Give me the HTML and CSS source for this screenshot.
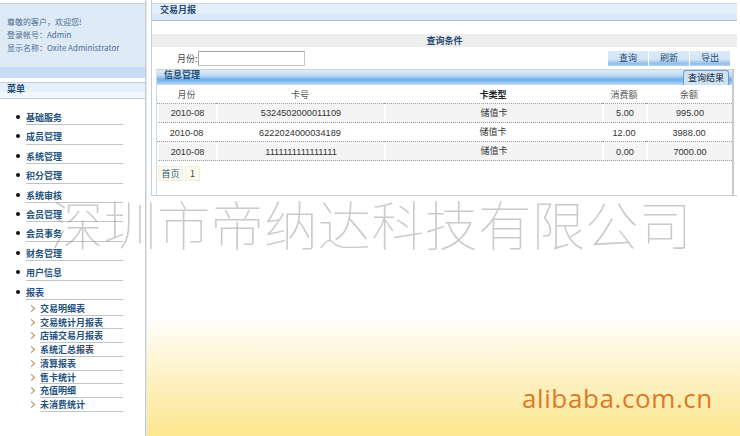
FILE: index.html
```html
<!DOCTYPE html>
<html lang="zh-CN">
<head>
  <meta charset="UTF-8" />
  <title>交易月报</title>
  <link rel="stylesheet" href="styles.css">
</head>
<body>
  <!-- left menu -->
  <div class="sidebar">
    <div class="welcome">
      <div class="welcome-text">
        <p>尊敬的客户，欢迎您!</p>
        <p>登录帐号：Admin</p>
        <p>显示名称：Oxite Administrator</p>
      </div>
      <div class="welcome-band"></div>
    </div>
    <div class="menu-head">菜单</div>
    <ul class="menu">
      <li>基础服务</li>
      <li>成员管理</li>
      <li>系统管理</li>
      <li>积分管理</li>
      <li>系统审核</li>
      <li>会员管理</li>
      <li>会员事务</li>
      <li>财务管理</li>
      <li>用户信息</li>
      <li>报表</li>
    </ul>
    <ul class="submenu">
      <li>交易明细表</li>
      <li>交易统计月报表</li>
      <li>店铺交易月报表</li>
      <li>系统汇总报表</li>
      <li>清算报表</li>
      <li>售卡统计</li>
      <li>充值明细</li>
      <li>未消费统计</li>
    </ul>
  </div>

  <!-- report -->
  <div class="main">
    <div class="panel">
      <div class="title-bar">交易月报</div>
      <div class="cond-bar">查询条件</div>
      <div class="form-row">
        <label class="month-label">月份:<input class="month-input" type="text"></label>
        <div class="buttons">
          <a class="btn">查询</a>
          <a class="btn">刷新</a>
          <a class="btn">导出</a>
        </div>
      </div>
      <div class="info">
        <div class="info-head">
          <span>信息管理</span>
          <a class="tab">查询结果</a>
        </div>
        <table class="grid">
          <tr>
            <th class="c1">月份</th>
            <th class="c2">卡号</th>
            <th class="c3 dark">卡类型</th>
            <th class="c4">消费额</th>
            <th class="c5">余额</th>
          </tr>
          <tr class="alt cut">
            <td><span>2010-08</span></td>
            <td><span>5324502000011109</span></td>
            <td class="type">储值卡</td>
            <td><span>5.00</span></td>
            <td><span>995.00</span></td>
          </tr>
          <tr>
            <td>2010-08</td>
            <td>6222024000034189</td>
            <td class="type">储值卡</td>
            <td>12.00</td>
            <td>3988.00</td>
          </tr>
          <tr class="alt">
            <td>2010-08</td>
            <td>1111111111111111</td>
            <td class="type">储值卡</td>
            <td>0.00</td>
            <td>7000.00</td>
          </tr>
        </table>
        <div class="pager">
          <a class="first">首页</a>
          <a class="num">1</a>
        </div>
      </div>
    </div>
  </div>

  <!-- marks laid over the shot -->
  <div class="watermark">深圳市帝纳达科技有限公司</div>
  <div class="site-mark">alibaba.com.cn</div>
</body>
</html>
```

FILE: styles.css
```css
* {
  margin: 0;
  padding: 0;
  box-sizing: border-box;
}

html, body {
  height: 436px;
  overflow: hidden;
}

body {
  display: flex;
  position: relative;
  width: 740px;
  background: #fff;
  font-family: "Noto Sans CJK SC", "Liberation Sans", sans-serif;
  font-size: 9px;
  color: #333;
}

/* SIDEBAR */
.sidebar {
  width: 146px;
  flex: none;
  padding-top: 3px;
  border-right: 1px solid #c4ccd4;
}

.welcome {
  height: 75px;
  background: #dfeaf7;
  border-top: 1px solid #c6d2dc;
  display: flex;
  flex-direction: column;
  justify-content: space-between;
}
.welcome-text {
  padding: 11px 0 0 7px;
  font-size: 8px;
  color: #4d6d92;
  line-height: 13px;
}
.welcome-text p {
  white-space: nowrap;
}
.welcome-band {
  height: 11px;
  background: #c8ddf5;
}

.menu-head {
  height: 17px;
  margin-top: 4px;
  padding-left: 7px;
  line-height: 12px;
  font-weight: bold;
  color: #1f4a72;
  border: 1px solid #c3ced8;
  border-width: 1px 0 1px 0;
  background: linear-gradient(#e4f0fb 0, #e4f0fb 60%, #f1f7fd 60%, #f1f7fd 100%);
}

.menu {
  list-style: none;
  margin-top: 7px;
  padding-left: 26px;
}
.menu li {
  position: relative;
  width: 97px;
  height: 19.4px;
  padding-top: 5px;
  line-height: 14px;
  font-weight: bold;
  color: #24527e;
  border-bottom: 1px solid #bcc4cc;
}
.menu li::before {
  content: "";
  position: absolute;
  left: -10px;
  top: 9px;
  width: 4px;
  height: 4px;
  border-radius: 50%;
  background: #111;
}

.submenu {
  list-style: none;
  margin-top: 2px;
  padding-left: 40px;
}
.submenu li {
  position: relative;
  width: 83px;
  height: 13.75px;
  line-height: 14px;
  font-weight: bold;
  color: #24527e;
  border-bottom: 1px solid #bcc4cc;
  white-space: nowrap;
}
.submenu li::before {
  content: "";
  position: absolute;
  left: -11px;
  top: 4px;
  width: 4px;
  height: 4px;
  border: solid #c08a4e;
  border-width: 1px 1px 0 0;
  transform: rotate(45deg);
}

/* MAIN AREA */
.main {
  flex: 1;
  padding: 0 3px 0 4px;
  border-left: 1px solid #e4e8ec;
  background: linear-gradient(#fff 0, #fff 315px, #fdf0bd 385px, #fde78f 436px);
}

.panel {
  height: 196px;
  padding-top: 3px;
  border-left: 1px solid #c4ccd4;
  border-bottom: 1px solid #c4ccd4;
  background: #fff;
}

.title-bar {
  height: 18px;
  padding-left: 8px;
  line-height: 11px;
  font-weight: bold;
  color: #1f4a72;
  border-top: 1px solid #c8d4dc;
  border-bottom: 1px solid #a9bccd;
  background: linear-gradient(#e3effb 0, #e3effb 55%, #dbe9fa 55%, #dbe9fa 100%);
}

.cond-bar {
  height: 13px;
  margin-top: 13px;
  line-height: 13px;
  text-align: center;
  font-weight: bold;
  color: #1f4a72;
  background: #eeeeee;
}

.form-row {
  display: flex;
  justify-content: space-between;
  height: 22px;
  padding: 4px 7px 0 25px;
}
.month-label {
  display: flex;
  align-items: center;
  gap: 0;
  height: 15px;
  color: #444;
}
.month-input {
  width: 107px;
  height: 15px;
  background: #fff;
  border: 1px solid #aab;
  border-color: #a4a4a4 #c4c4c4 #c4c4c4 #a4a4a4;
}

.buttons {
  display: flex;
  gap: 1px;
}
.btn {
  width: 40px;
  height: 15px;
  line-height: 13px;
  text-align: center;
  color: #1c4a74;
  background: linear-gradient(#dceaf8 0, #d4e5f7 55%, #8fbde8 85%, #b8d5f0 100%);
}

.info {
  height: 126px;
  margin: 0 3px 0 4px;
  border-right: 2px solid #c4ccd4;
  border-left: 1px solid #d4dae0;
}

.info-head {
  display: flex;
  justify-content: space-between;
  height: 16px;
  padding-left: 7px;
  line-height: 10px;
  font-weight: bold;
  color: #1f4a72;
  border-top: 1px solid #c8d4dc;
  background: linear-gradient(#dfebf7 0, #c2dcf4 35%, #6fafee 65%, #8cc0ef 80%, #c4dcf2 100%);
}
.tab {
  width: 46px;
  height: 15px;
  margin-right: 3px;
  line-height: 13px;
  text-align: center;
  font-weight: normal;
  color: #123;
  background: #cfe2f4;
  border: 1px solid #6f9cc4;
  border-bottom: 0;
  border-radius: 3px 3px 0 0;
}

.grid {
  width: 100%;
  table-layout: fixed;
  border-collapse: separate;
  border-spacing: 0;
}
.grid th {
  height: 19px;
  font-weight: normal;
  color: #555;
  border-bottom: 1px dotted #999;
}
.grid th.dark {
  font-weight: bold;
  color: #222;
}
.grid td {
  height: 19px;
  padding-top: 2px;
  text-align: center;
  font-family: "Liberation Sans", "Noto Sans CJK SC", sans-serif;
  font-size: 9.2px;
  color: #333;
  border-bottom: 1px dotted #999;
}
.grid td.type {
  font-family: "Noto Sans CJK SC", sans-serif;
  font-size: 9px;
  padding: 0 0 1px;
}
.grid .alt td {
  background: #f4f4f4;
  border-left: 2px solid #fff;
}
.grid .cut span {
  display: inline-block;
  height: 8px;
  line-height: 8px;
  overflow: hidden;
}
.c1 { width: 59px; }
.c2 { width: 168px; }
.c3 { width: 218px; }
.c4 { width: 44px; }

.pager {
  display: flex;
  gap: 2px;
  padding: 5px 0 0 1px;
}
.pager a {
  height: 15px;
  line-height: 14px;
  text-align: center;
  background: #fbfaec;
  border: 1px solid #f0eedc;
}
.first {
  width: 25px;
  color: #1c5a70;
}
.num {
  width: 15px;
  color: #444;
}

/* OVERLAID MARKS */
.watermark {
  position: absolute;
  left: 50px;
  top: 184px;
  font-size: 53.5px;
  line-height: 78px;
  font-weight: 100;
  white-space: nowrap;
  color: rgba(150, 150, 150, 0.5);
}
.site-mark {
  position: absolute;
  left: 522px;
  top: 381px;
  font-family: "Open Sans", sans-serif;
  font-size: 26px;
  line-height: 34px;
  letter-spacing: 0.6px;
  color: #dc7a2a;
}
```
